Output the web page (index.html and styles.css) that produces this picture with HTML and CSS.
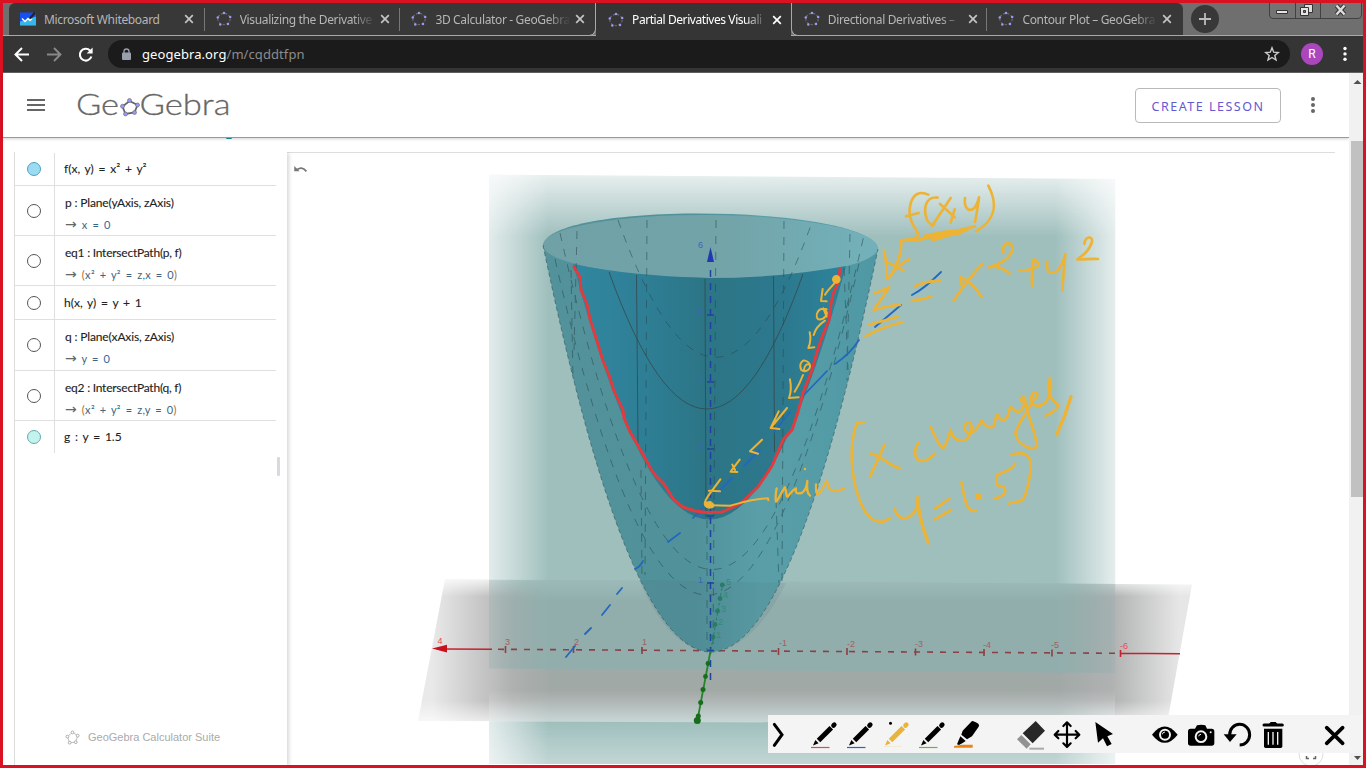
FILE: index.html
```html
<!DOCTYPE html>
<html lang="en">
<head>
<meta charset="utf-8">
<title>Partial Derivatives Visualization</title>
<link rel="stylesheet" href="styles.css">
</head>
<body>
<svg width="0" height="0" class="defs" aria-hidden="true">
  <defs>
    <symbol id="fav" viewBox="0 0 16 16">
      <ellipse cx="8" cy="8" rx="6.200" ry="5.600" fill="none" stroke="#666" stroke-width="1.200" stroke-dasharray="2.500 1.500"/>
      <g fill="#9a98f8"><circle cx="8" cy="2" r="1.250"/><circle cx="14.200" cy="6" r="1.250"/><circle cx="12" cy="13" r="1.250"/><circle cx="4.300" cy="13.400" r="1.250"/><circle cx="1.800" cy="6.600" r="1.250"/></g>
    </symbol>
    <symbol id="cross" viewBox="0 0 10 10"><path d="M1.2 1.2 8.8 8.8M8.8 1.2 1.2 8.8" stroke="currentColor" stroke-width="1.7"/></symbol>
    <symbol id="pen" viewBox="0 0 36 38">
      <path d="M12.5 25.5 25.3 12.7" stroke="currentColor" stroke-width="5"/>
      <path d="M27.5 10.5 28.3 9.7" stroke="currentColor" stroke-width="4.6" stroke-linecap="round"/>
      <path d="M7 30.4 9.4 25 12.6 28.2Z" fill="currentColor"/>
    </symbol>
  </defs>
</svg>
<div class="screen">
  <div class="tabs">
    <div class="tab first"><svg class="fav" viewBox="0 0 16 13"><path d="M0 0H16V13H0Z" fill="#1550f5"/><path d="M0 13V9L7 7 16 4V13Z" fill="#35b7ec"/><path d="M2 6 5 9 8 6 10 8 12 6" fill="none" stroke="#fff" stroke-width="1.5"/><path d="M10 6 15 0" stroke="#222" stroke-width="2"/></svg><span class="title">Microsoft Whiteboard</span><svg class="x"><use href="#cross"/></svg></div>
    <div class="tab sep"><svg class="fav"><use href="#fav"/></svg><span class="title">Visualizing the Derivative</span><svg class="x"><use href="#cross"/></svg></div>
    <div class="tab sep left-of"><svg class="fav"><use href="#fav"/></svg><span class="title">3D Calculator - GeoGebra</span><svg class="x"><use href="#cross"/></svg></div>
    <div class="tab active"><svg class="fav"><use href="#fav"/></svg><span class="title tight">Partial Derivatives Visuali</span><svg class="x"><use href="#cross"/></svg></div>
    <div class="tab right-of"><svg class="fav"><use href="#fav"/></svg><span class="title">Directional Derivatives –</span><svg class="x"><use href="#cross"/></svg></div>
    <div class="tab sep last"><svg class="fav"><use href="#fav"/></svg><span class="title">Contour Plot – GeoGebra</span><svg class="x"><use href="#cross"/></svg></div>
    <div class="strip">
      <svg class="plus" viewBox="0 0 28 28"><circle cx="14" cy="14" r="14" fill="#383838"/><path d="M8 14H20M14 8V20" stroke="#bbb" stroke-width="1.8"/></svg>
      <svg class="winbtns" viewBox="0 0 93 16"><path d="M.5 0V12Q.5 15.500 4 15.500H89Q92.500 15.500 92.500 12V0M26.500 0V15.500M51.500 0V15.500" fill="#747474" stroke="#414141"/><path d="M7.500 7.500H18.500V10.500H7.500Z" fill="#e4e4e4" stroke="#333"/><path d="M35.500 1.500H43.500V9.500H35.500Z" fill="#ddd" stroke="#333"/><path d="M31.500 4.500H39.500V12.500H31.500Z" fill="#e4e4e4" stroke="#333"/><path d="M34.500 7.500H36.500V9.500H34.500Z" fill="#777" stroke="#333"/><path d="M67.500 2.500 75.500 11.500M75.500 2.500 67.500 11.500" stroke="#333" stroke-width="4.500"/><path d="M67.500 2.500 75.500 11.500M75.500 2.500 67.500 11.500" stroke="#ddd" stroke-width="2.500"/></svg>
    </div>
  </div>
  <div class="addressbar">
    <svg class="nav" viewBox="0 0 96 34" fill="none"><path d="M26 17.500H13M19 11 12.500 17.500 19 24" stroke="#fff" stroke-width="2"/><path d="M44 17.500H57M51 11 57.500 17.500 51 24" stroke="#888" stroke-width="1.900"/><path d="M87 13.500A5.900 5.900 0 1 0 88.400 19.500" stroke="#fff" stroke-width="2.100"/><path d="M89.600 10.500V16.500H83.600Z" fill="#fff"/></svg>
    <div class="omnibox">
      <svg class="lock" viewBox="0 0 9 12"><path d="M2 5V3.500A2.500 2.500 0 0 1 7 3.500V5" fill="none" stroke="#9aa0ab" stroke-width="1.300"/><rect y="4.500" width="9" height="7.500" rx="1" fill="#9aa0ab"/></svg>
      <span class="url"><b>geogebra.org</b>/m/cqddtfpn</span>
      <svg class="star" viewBox="0 0 16 16"><path d="M8 1.800 9.700 6.200 14.300 6.500 10.800 9.500 12 14 8 11.500 4 14 5.200 9.500 1.700 6.500 6.300 6.200Z" fill="none" stroke="#ccc" stroke-width="1.400"/></svg>
    </div>
    <span class="avatar">R</span>
    <svg class="kebab" viewBox="0 0 4 16"><g fill="#fff"><circle cx="2" cy="2.500" r="1.700"/><circle cx="2" cy="7.900" r="1.700"/><circle cx="2" cy="13.300" r="1.700"/></g></svg>
  </div>

  <div class="viewport">
    <div class="page">
      <header class="site-header">
        <svg class="burger" viewBox="0 0 18 12"><path d="M0 1H18M0 6H18M0 11H18" stroke="#666" stroke-width="1.900"/></svg>
        <svg class="logo" viewBox="76 88 158 34">
          <g class="wordmark"><text x="76" y="114.700" textLength="43" lengthAdjust="spacingAndGlyphs">Ge</text><text x="139.500" y="114.700" textLength="91" lengthAdjust="spacingAndGlyphs">Gebra</text></g>
          <path d="M129.500 101 137.500 105 134.500 112.500 125.500 114 122.500 106.500Z" fill="none" stroke="#666" stroke-width="1.800"/>
          <g fill="#9996ff" stroke="#666" stroke-width=".6"><circle cx="129.500" cy="100.500" r="2"/><circle cx="137.500" cy="105" r="2"/><circle cx="134.500" cy="112.500" r="2"/><circle cx="125.500" cy="114" r="2"/><circle cx="122.500" cy="106.300" r="2"/></g>
        </svg>
        <span class="create">CREATE LESSON</span>
        <svg class="more" viewBox="0 0 4 16"><g fill="#666"><circle cx="2" cy="2" r="2"/><circle cx="2" cy="8" r="2"/><circle cx="2" cy="14" r="2"/></g></svg>
      </header>
      <div class="heading-tail"></div>
      <main class="applet">
        <section class="algebra">
          <div class="rows">
            <div class="row r1"><i class="dot blue"></i><div class="cell"><span class="ex w1">f(x, y) = x² + y²</span></div></div>
            <div class="row r2"><i class="dot"></i><div class="cell"><span class="ex w2">p : Plane(yAxis, zAxis)</span><span class="out"><em>→</em> x = <s>0</s></span></div></div>
            <div class="row r2"><i class="dot"></i><div class="cell"><span class="ex w3">eq1 : IntersectPath(p, f)</span><span class="out"><em>→</em> <q>(</q>x² + y² = z,x = 0<q>)</q></span></div></div>
            <div class="row r3"><i class="dot"></i><div class="cell"><span class="ex w1">h(x, y) = y + 1</span></div></div>
            <div class="row r4"><i class="dot"></i><div class="cell"><span class="ex w2">q : Plane(xAxis, zAxis)</span><span class="out"><em>→</em> y = <s>0</s></span></div></div>
            <div class="row r2"><i class="dot"></i><div class="cell"><span class="ex w3">eq2 : IntersectPath(q, f)</span><span class="out"><em>→</em> <q>(</q>x² + y² = z,y = 0<q>)</q></span></div></div>
            <div class="row r5"><i class="dot teal"></i><div class="cell"><span class="ex w1">g : y = 1.5</span></div></div>
          </div>
          <div class="grip"></div>
          <div class="brand"><svg viewBox="0 0 16 16"><path d="M8 2.500 13.500 6 11.500 13 5 13.500 2.500 7Z" fill="none" stroke="#bbb"/><g fill="#fff" stroke="#aaa"><circle cx="8" cy="2.500" r="1.500"/><circle cx="13.500" cy="6" r="1.500"/><circle cx="11.500" cy="13" r="1.500"/><circle cx="5" cy="13.500" r="1.500"/><circle cx="2.500" cy="7" r="1.500"/></g></svg><span>GeoGebra Calculator Suite</span></div>
        </section>
        <section class="graphics">
          <svg class="scene" viewBox="287 153 1061 611" fill="none">
            <defs>
              <linearGradient id="hx" gradientUnits="userSpaceOnUse" x1="489" x2="1115" y1="0" y2="0"><stop offset="0" stop-color="#fff" stop-opacity=".3"/><stop offset=".045" stop-color="#fff" stop-opacity=".62"/><stop offset=".095" stop-color="#fff"/><stop offset=".905" stop-color="#fff"/><stop offset=".955" stop-color="#fff" stop-opacity=".62"/><stop offset="1" stop-color="#fff" stop-opacity=".28"/></linearGradient>
              <linearGradient id="vy" gradientUnits="userSpaceOnUse" x1="0" x2="0" y1="175" y2="790"><stop offset="0" stop-color="#9fbfbd" stop-opacity=".25"/><stop offset=".05" stop-color="#9fbfbd" stop-opacity=".62"/><stop offset=".1" stop-color="#9fbfbd"/><stop offset=".89" stop-color="#9fbfbd"/><stop offset="1" stop-color="#9fbfbd" stop-opacity=".4"/></linearGradient>
              <mask id="edge" maskUnits="userSpaceOnUse" x="480" y="160" width="650" height="620"><rect x="489" y="160" width="626.500" height="620" fill="url(#hx)"/></mask>
              <linearGradient id="gx" gradientUnits="userSpaceOnUse" x1="432" y1="650" x2="1179" y2="654"><stop offset="0" stop-color="#e9e9e9"/><stop offset=".07" stop-color="#c4c4c4"/><stop offset=".11" stop-color="#adb0af"/><stop offset=".16" stop-color="#a1a9a7"/><stop offset=".84" stop-color="#a1a9a7"/><stop offset=".91" stop-color="#b0b2b2"/><stop offset="1" stop-color="#e6e6e6"/></linearGradient>
              <linearGradient id="gy" gradientUnits="userSpaceOnUse" x1="0" x2="0" y1="579" y2="724"><stop offset="0" stop-color="#fff" stop-opacity=".2"/><stop offset=".12" stop-color="#fff"/><stop offset=".84" stop-color="#fff"/><stop offset="1" stop-color="#fff" stop-opacity=".25"/></linearGradient>
              <mask id="floor" maskUnits="userSpaceOnUse" x="410" y="570" width="800" height="160"><rect x="410" y="570" width="800" height="160" fill="url(#gy)"/></mask>
              <linearGradient id="under" gradientUnits="userSpaceOnUse" x1="0" x2="0" y1="690" y2="724"><stop offset="0" stop-color="#fff" stop-opacity="0"/><stop offset="1" stop-color="#fff" stop-opacity=".45"/></linearGradient>
              <linearGradient id="fy" gradientUnits="userSpaceOnUse" x1="0" x2="0" y1="580" y2="602"><stop offset="0" stop-color="#9bbab8"/><stop offset="1" stop-color="#91aead"/></linearGradient>
              <linearGradient id="body" x1="0" x2="1"><stop offset="0" stop-color="#53929a"/><stop offset=".45" stop-color="#50919a"/><stop offset=".65" stop-color="#5a9fa8"/><stop offset="1" stop-color="#4e98a4"/></linearGradient>
              <linearGradient id="rim" x1="0" x2="1"><stop offset="0" stop-color="#70a1a7"/><stop offset=".5" stop-color="#72a3a7"/><stop offset="1" stop-color="#73b1ba"/></linearGradient>
              <linearGradient id="inner" x1="0" x2="1"><stop offset="0" stop-color="#30879f"/><stop offset=".25" stop-color="#2e7f96"/><stop offset=".48" stop-color="#2c7586"/><stop offset=".75" stop-color="#2c788d"/><stop offset="1" stop-color="#2d839c"/></linearGradient>
            </defs>
            <g mask="url(#edge)"><path d="M489 174.500 1115.500 179V780H489Z" fill="url(#vy)"/></g>
            <g mask="url(#floor)"><path d="M445 579 1192 584.500 1167 724 418 721Z" fill="url(#gx)"/></g>
            <path d="M489 690H1115V723.500L489 721.500Z" fill="url(#under)"/>
            <g mask="url(#edge)"><path d="M489 580 1115.500 584V673L489 668.500Z" fill="url(#fy)"/></g>
            <g stroke="#8b4044" stroke-width="1.600"><path d="M498 649.300 1120 653.300" stroke-dasharray="6 7"/><path d="M505.500 646V653M573.500 646V653M642 647V654M778.500 648V655M847 648V655M915.500 648.500V655.500M984 649V656M1052 649.500V656.500"/></g>
            <path d="M445 649 492 649.200M1120 653.200 1180 653.800M1120.500 650V657" stroke="#c6202f" stroke-width="1.600"/><path d="M432 648.600 447 644.800V652.600Z" fill="#c8101e"/>
            <g class="num rednum"><text class="bright" x="437.500" y="644">4</text><text x="505" y="645">3</text><text x="574" y="645">2</text><text x="642" y="645">1</text><text x="779" y="646">-1</text><text x="847" y="647">-2</text><text x="915" y="647">-3</text><text x="983" y="648">-4</text><text x="1051" y="648">-5</text><text class="bright" x="1120" y="649">-6</text></g>
            <path d="M543 245Q710.500 1057 878 249C870 205 552 200 543 245Z" fill="url(#body)"/>
            <path d="M639 580Q670 651 710 651Q753 650 786 583Z" fill="#476f75" opacity=".12"/>
            <ellipse cx="710.500" cy="246.500" rx="167.500" ry="31.500" transform="rotate(.5 710 247)" fill="url(#rim)"/>
            <path d="M573 264Q709 774 846 266Q780 278 709 278Q630 276 573 264Z" fill="url(#inner)"/>
            <g stroke="#36474b" stroke-width="1" opacity=".8"><path d="M609 272Q707 545 803 274M636.500 275 638 445M705 279 706 517M773.500 276 774.500 452"/></g>
            <g stroke="#29484c" stroke-width="1" stroke-dasharray="8 8" opacity=".55">
              <path d="M618 220Q715 492 811 225M647 220 645 575M716 220 713 650M784 221 782 583M577 231 574 350M850 234 847 380M560 233Q712 905 864 235M555 259Q707 931 860 259M571 270 573 380M844 268 848 370M641 470 642 578M707 520V650M776 500 779 583"/>
              <path d="M543 245Q710.500 1057 878 249" stroke-dasharray="4 3"/>
            </g>
            <g stroke="#20419f" stroke-width="1.500"><path d="M710.500 270V682" stroke-dasharray="7 6"/><path d="M707 315H714M707 382H714M707 449H714M707 516H714M707 583H714M707 650.500H714"/></g><path d="M710.500 247 714 262H707Z" fill="#2038b0"/>
            <g class="num bluenum"><text x="698" y="248">6</text><text x="698" y="316">5</text><text x="698" y="383">4</text><text x="698" y="450">3</text><text x="698" y="517">2</text><text x="698" y="583">1</text></g>
            <g fill="#277c68" stroke="#277c68"><path d="M711 650 722.500 585" stroke-dasharray="3 2"/><circle cx="713" cy="637" r="2"/><circle cx="715" cy="624.500" r="2"/><circle cx="717.500" cy="611" r="2"/><circle cx="720" cy="598.500" r="2"/><circle cx="722.300" cy="585" r="2"/></g>
            <g class="num greennum"><text x="726" y="585">5</text><text x="723" y="598">4</text><text x="721" y="612">3</text><text x="718" y="625">2</text><text x="716" y="638">1</text></g>
            <g fill="#176d1b"><path d="M710.500 651 697.500 720" stroke="#24852a" stroke-width="1.800"/><circle cx="708" cy="663.500" r="2.400"/><circle cx="705.500" cy="676.500" r="2.400"/><circle cx="703" cy="689.500" r="2.500"/><circle cx="700.700" cy="702.500" r="2.500"/><circle cx="698.300" cy="716" r="2.500"/><circle cx="697.300" cy="720.500" r="3.500"/></g>
          </svg>
          <svg class="undo" viewBox="0 0 15 10"><path d="M2 6Q8 .500 13.500 7" fill="none" stroke="#777" stroke-width="2"/><path d="M0 1V7H6Z" fill="#777"/></svg>
          <svg class="full" viewBox="0 0 28 28"><circle cx="14" cy="14" r="12" fill="#fff" stroke="#ddd"/><path d="M9.500 12V9.500H12M16 9.500H18.500V12M18.500 16V18.500H16M12 18.500H9.500V16" fill="none" stroke="#666" stroke-width="1.500"/></svg>
        </section>
      </main>
    </div>
    <div class="scrollbar"><svg viewBox="0 0 14 16"><path d="M4.500 11 8.500 7 12.500 11Z" fill="#505050"/></svg><div class="thumb"></div><svg viewBox="0 0 14 16"><path d="M5 7H12L8.500 11Z" fill="#505050"/></svg></div>
  </div>
</div>

<svg class="ink" viewBox="0 0 1366 768" fill="none" stroke-linecap="round" stroke-linejoin="round">
  <path stroke="#2468bd" stroke-width="1.800" d="M566 657 575 646M585 634 591 628M602 615 610 605M617 594 622 588M635 569Q640 567 643 561M668 542 680 533M693 518 705 505M718 492 732 478M744 466 760 450M774 432 790 412M802 397 827 371M835 364Q850 354 859 340M875 327 901 305M912 295Q924 289 941 272"/>
  <path stroke="#e23b3e" stroke-width="2.900" d="M574 267 580 277 581 290 587 304 590 319 597 341 603 361 609 375 614 391 623 410 624 418 630 432 640 449 651 469 655 475 664 484 674 500 683 507 695 511 707 512.500 722 512 740 504 758 487 772 466 783 440 792 430 798 412 803 393 812 370 817 352 822 337 829 320 831 304 833 294 838 283 840 269"/>
  <g stroke="#edb335" stroke-width="8">
    <g transform="translate(860 170) scale(.33333)">
      <path d="M205 74C180 62 160 72 152 100C140 145 165 175 176 192C172 205 150 210 130 210M138 139 176 129M233 83C200 78 190 110 198 140C202 158 212 165 222 163M240 102 284 142M272 84 216 168M284 118 272 158M315 84C312 110 322 125 338 118C350 110 354 95 357 82C354 110 350 130 345 156M385 47C410 95 415 145 348 184"/>
      <path d="M130 210 170 211 345 169M193 198C260 180 300 180 322 180L220 210M218 204 300 190"/>
      <path d="M124 210C125 250 115 275 92 320M72 241C78 265 80 300 80 325L86 325C105 295 130 275 148 268M78 274 130 301"/>
      <path d="M45 370 88 352 41 420C70 412 100 404 120 405M28 464 113 440M17 499C50 480 90 465 129 456M166 348C190 338 220 332 242 333M155 391C180 390 200 385 214 379"/>
      <path d="M304 345 303 322C325 330 345 350 365 381M367 282Q325 325 281 392M430 248C425 215 455 210 458 235C455 265 415 285 387 292C410 285 430 295 449 310M479 303C495 302 520 300 537 285Q530 268 521 268C518 290 512 320 517 349M562 275C558 305 570 315 588 305C605 290 612 270 616 252C612 290 610 320 607 361M673 222C675 200 697 195 696 215C690 240 670 255 652 268C670 270 690 265 714 267"/>
      <path d="M30 851C55 850 80 885 122 896M74 823 30 920M176 817C160 840 160 875 190 873C205 870 215 862 224 851M212 770C225 800 235 825 249 836C262 820 265 795 272 780C275 800 285 812 310 812C325 808 335 790 335 770C330 745 310 760 315 780C325 800 345 790 365 752C375 770 385 775 400 770C408 755 405 740 412 733C420 750 430 755 440 745C450 725 448 712 452 710C465 725 475 730 483 722C498 700 500 680 487 681C475 690 485 700 495 690C495 720 530 790 531 830C510 845 470 820 466 790C468 770 500 730 520 690C548 670 520 655 514 680C510 710 540 718 560 692M570 624C560 650 560 680 596 706C590 720 575 730 557 737M570 624C577 650 570 680 560 692"/>
      <path stroke-width="10" d="M633 680Q615 740 590 794M173 983C175 1030 190 1080 205 1118"/>
      <path d="M104 1015C110 1045 130 1050 150 1040C170 1025 175 1000 173 983M226 1016 268 986M224 1048 273 1020M304 936C315 990 320 1030 348 1022M465 881C455 900 435 905 412 914C405 950 410 945 430 950C450 970 415 985 402 986M454 854C500 840 515 860 512 900C505 950 495 980 488 990C475 997 460 995 447 1001"/>
      <circle cx="355" cy="980" r="6" fill="#edb335"/>
    </g>
    <g transform="translate(640 400) scale(.33333)">
      <path d="M674 67 650 70C625 140 635 230 655 290C675 350 710 385 750 354"/>
      <path stroke-width="7" d="M410 265C405 290 408 305 408 305C415 300 425 275 435 262C440 275 438 290 442 290C450 285 455 270 468 265C465 280 470 282 485 279C500 270 500 255 502 243C500 265 500 280 510 287M495 207V207M528 253C528 270 528 283 533 283C550 270 555 250 560 240C565 265 570 275 590 273L613 266"/>
      <path stroke-width="6" d="M385 301 384 295C330 297 300 310 270 317L210 316M241 238 210 280C195 300 190 312 197 318M207 272 240 274M195 308 212 306M299 179 272 215 292 216M277 194 285 210M366 119 330 154 354 161M441 24 392 84 418 87M416 34 392 84"/>
      <ellipse cx="209" cy="316" rx="12" ry="8" fill="#edb335" stroke-width="4"/>
    </g>
    <g transform="translate(680 170) scale(.33333)" stroke-width="6">
      <circle cx="469" cy="328" r="10" fill="#edb335"/>
      <path d="M463 340Q440 365 435 374M428 357 423 393 440 394M440 418C410 410 405 440 415 448C435 450 448 430 435 420M430 415 440 440M435 452C415 465 405 480 401 495M389 487Q395 510 385 534L403 532M388 580C370 560 355 580 364 600C375 608 392 600 390 585C380 578 372 590 372 600M369 615Q360 640 344 665M330 628 Q336 660 327 684L356 682"/>
    </g>
  </g>
</svg>

<div class="pentools">
  <svg class="chev" viewBox="24 45 60 114"><path d="M43 73 66 104 43 136" fill="none" stroke="#000" stroke-width="9" stroke-linecap="round"/></svg>
  <svg class="tool" viewBox="0 0 36 38"><use href="#pen"/><path d="M5 32.500H23.500" stroke="#e04a4e" stroke-width="1.200"/></svg>
  <svg class="tool" viewBox="0 0 36 38"><use href="#pen"/><path d="M5 32.500H23.500" stroke="#2466c0" stroke-width="1.200"/></svg>
  <svg class="tool yellow" viewBox="0 0 36 38"><use href="#pen"/><circle cx="12.500" cy="8.300" r="1.500" fill="#000"/><path d="M6 31.500H23.500" stroke="#f0ead6"/></svg>
  <svg class="tool" viewBox="0 0 36 38"><use href="#pen"/><path d="M5 32.500H23.500" stroke="#77a84b" stroke-width="1.200"/></svg>
  <svg class="tool" viewBox="573 45 108 114"><path d="M639 63Q643 62 658 71Q662 75 659 80L639 109 624 118 607 104 611 92ZM604 109 620 123 611 129 600 135 594 133Z" fill="#000"/><path d="M585 138 610 134H641V143H585Z" fill="#ef8214"/></svg>
  <svg class="tool eraser" viewBox="759 45 108 114"><path d="M827 63 855 92 818 130 788 100Z" fill="#282828"/><path d="M784 105 812 133 800 146 771 118Z" fill="#929292"/><path d="M808 146H852" stroke="#aaa" stroke-width="6"/></svg>
  <svg class="tool" viewBox="-33 45 108 114"><path d="M21 68V140M-15 104H57M10 78 21 67 32 78M10 130 21 141 32 130M-5 93-16 104-5 115M47 93 58 104 47 115" fill="none" stroke="#000" stroke-width="6.500" stroke-linecap="round" stroke-linejoin="round"/></svg>
  <svg class="tool" viewBox="75 45 108 114"><path d="M106 66 159 102 142 109 155 132 141 139 129 115 114 128Z" fill="#000"/></svg>
  <svg class="tool eye" viewBox="261 45 108 114"><path d="M276 104Q314 55 353 104Q314 153 276 104Z" fill="#000"/><circle cx="315" cy="104" r="15" fill="#000" stroke="#f4f4f4" stroke-width="6"/><path d="M307 103Q308 96 315 96" fill="none" stroke="#f4f4f4" stroke-width="3"/></svg>
  <svg class="tool" viewBox="369 45 108 114"><path d="M392 86H405L411 76Q424 73 436 76L441 86H455Q463 86 463 94V129Q463 137 455 137H392Q384 137 384 129V94Q384 86 392 86Z" fill="#000"/><circle cx="423" cy="110" r="16" fill="none" stroke="#f4f4f4" stroke-width="6"/><path d="M416 109Q417 103 423 103" fill="none" stroke="#f4f4f4" stroke-width="3"/><circle cx="452" cy="97" r="3" fill="#f4f4f4"/></svg>
  <svg class="tool" viewBox="477 45 108 114"><path d="M509 105A30 31 0 1 1 539 135" fill="none" stroke="#000" stroke-width="9"/><path d="M491 103H530L510 126Z" fill="#000"/></svg>
  <svg class="tool" viewBox="585 45 108 114"><path d="M612 75H667" stroke="#000" stroke-width="9" stroke-linecap="round"/><path d="M627 72 632 66H647L652 72Z" fill="#000"/><path d="M612 86H667V139Q667 144 662 144H617Q612 144 612 139Z" fill="#000"/><path d="M625 96V134M639 96V134M653 96V134" stroke="#f4f4f4" stroke-width="4"/></svg>
  <svg class="tool close" viewBox="771 45 108 114"><path d="M800 83 848 130M848 83 800 130" stroke="#000" stroke-width="11" stroke-linecap="round"/></svg>
</div>
</body>
</html>
```
FILE: styles.css
```css
* { box-sizing: border-box; }
body { margin: 0; width: 1366px; height: 768px; overflow: hidden; position: relative; background: #fff; font-family: "Noto Sans", "Open Sans", sans-serif; }
svg { display: block; flex: none; }
.defs { position: absolute; }
.screen { width: 1366px; height: 768px; border: 3px solid #da1023; display: flex; flex-direction: column; }

.tabs { height: 33px; display: flex; background: #6f6f6f; border-bottom: 1px solid #a9a9a9; padding-left: 5.500px; flex: none; }
.tab { width: 195.700px; height: 32px; display: flex; align-items: center; padding-left: 11.500px; background: #383838; color: #b6b6b6; flex: none; position: relative; }
.first { border-radius: 6px 0 0 0; }
.last { border-radius: 0 6px 0 0; }
.sep::before { content: ""; width: 1px; height: 23px; background: #777; margin: 0 0 0 -12px; align-self: center; }
.sep .fav { margin-left: 11px; }
.fav { width: 16px; height: 16px; }
.title { width: 134px; margin-left: 8px; font-size: 12px; letter-spacing: -.350px; white-space: nowrap; -webkit-mask-image: linear-gradient(90deg, #000 84%, transparent 101%); mask-image: linear-gradient(90deg, #000 84%, transparent 101%); }
.tight { letter-spacing: -.430px; }
.first .title { -webkit-mask-image: none; mask-image: none; }
.x { width: 10px; height: 10px; margin-left: 6px; color: #c4c4c4; }
.active { background: #353535; color: #fff; height: 33px; padding-left: 12.500px; }
.active .x { color: #fff; }
.left-of { border-bottom: 1px solid #a9a9a9; border-right: 1px solid #a9a9a9; border-radius: 0 0 7px 0; height: 33px; }
.right-of { border-bottom: 1px solid #a9a9a9; border-left: 1px solid #a9a9a9; border-radius: 0 0 0 7px; height: 33px; padding-left: 11.500px; }
.strip { flex: 1; display: flex; align-items: flex-start; }
.plus { width: 28px; height: 28px; margin: 2px 0 0 8px; }
.winbtns { width: 93px; height: 16px; margin: 0 1px 0 auto; }

.addressbar { height: 37px; background: #353535; border-bottom: 1px solid #626262; display: flex; align-items: center; flex: none; }
.nav { width: 96px; height: 34px; }
.omnibox { width: 1182px; height: 28px; border-radius: 14px; background: #1b1b1b; margin-left: 9px; display: flex; align-items: center; padding: 0 10px 0 14px; }
.lock { width: 9px; height: 12px; }
.url { margin-left: 11px; font-size: 13px; letter-spacing: .080px; color: #8c8c8c; flex: 1; }
.url b { color: #fff; font-weight: 400; }
.star { width: 16px; height: 16px; }
.avatar { width: 22px; height: 22px; border-radius: 50%; background: #ab47bc; color: #fff; font: 12px/22px Roboto, sans-serif; text-align: center; margin-left: 11px; }
.kebab { width: 4px; height: 16px; margin-left: 20px; }

.viewport { flex: 1; display: flex; min-height: 0; }
.page { flex: 1; min-width: 0; display: flex; flex-direction: column; }
.site-header { height: 65px; border-bottom: 1px solid #999; box-shadow: 0 1px 3px rgba(0,0,0,.18); display: flex; align-items: center; padding: 0 34px 0 24px; flex: none; }
.burger { width: 18px; height: 12px; }
.logo { width: 158px; height: 34px; margin-left: 31px; }
.wordmark { font-family: Lato, sans-serif; font-size: 29px; font-weight: 300; fill: #666; stroke: #666; stroke-width: .300px; }
.create { width: 146px; height: 35px; margin-left: auto; border: 1px solid #b9b9b9; border-radius: 4px; text-align: center; font-size: 12.500px; line-height: 35px; letter-spacing: 1.500px; color: #6557d2; white-space: nowrap; }
.more { width: 4px; height: 16px; margin-left: 30px; }
.heading-tail { width: 6px; height: 1px; margin-left: 223px; background: #158088; flex: none; border-radius: 0 0 3px 3px; }
.applet { margin: 13px 0 0 11px; flex: 1; min-height: 0; display: flex; position: relative; }
.applet::before { content: ""; position: absolute; z-index: 1; left: 0; top: 0; width: 1321px; height: 1px; background: #ddd; }
.algebra { width: 273px; border-left: 1px solid #ddd; padding-top: 1px; display: flex; flex-direction: column; box-shadow: 2px 1px 4px rgba(0,0,0,.16); position: relative; background: #fff; z-index: 1; clip-path: inset(0 -8px 0 0); }
.rows { width: 261px; }
.row { display: flex; align-items: center; border-bottom: 1px solid #dfdfdf; padding-left: 12px; }
.r1 { height: 33px; }
.r2 { height: 50px; }
.r3 { height: 34px; }
.r4 { height: 51px; }
.r5 { height: 32px; border-bottom: 0; }
.dot { width: 14px; height: 14px; border: 1px solid #555; border-radius: 50%; background: #fff; flex: none; }
.dot.blue { background: #9bdcf2; border-color: #529fc3; }
.dot.teal { background: #c2f3ee; border-color: #69aaaa; }
.cell { height: 100%; flex: 1; border-left: 1px solid #dfdfdf; margin-left: 13px; padding-left: 10px; display: flex; flex-direction: column; justify-content: center; }
.ex, .out { white-space: nowrap; font-family: Lato, "Open Sans", sans-serif; color: #222; }
.ex { font-size: 12px; line-height: 16px; -webkit-text-stroke: .100px #222; }
.w1 { margin-left: -1px; word-spacing: 1.700px; }
.w2 { letter-spacing: -.150px; }
.w3 { letter-spacing: -.240px; }
.out { font-size: 11px; line-height: 14px; margin-top: 7px; color: #3d6484; letter-spacing: .300px; word-spacing: 1.700px; }
.r2 .cell, .r4 .cell { padding-top: 5px; }
.out em { font: 14px/10px "DejaVu Sans", sans-serif; color: #666; }
.out s { text-decoration: none; color: #3268a2; }
.out q { quotes: none; color: #a9692f; }
.grip { width: 3px; height: 19px; background: #d8d9de; border-radius: 1px; margin: 4px 0 0 262px; }
.brand { margin: auto 0 20px 50px; display: flex; align-items: center; gap: 8px; font: 11px/16px "Liberation Sans", sans-serif; color: #aaa; }
.brand svg { width: 15px; height: 15px; }
.graphics { flex: 1; position: relative; overflow: hidden; }
.scene { width: 1061px; height: 611px; margin-top: 1px; }
.undo { position: absolute; left: 7px; top: 13px; width: 14px; height: 9px; }
.full { position: absolute; left: 1010px; top: 588px; width: 28px; height: 28px; }
.num { font: 9px "Liberation Sans", sans-serif; }
.rednum { fill: #a35e62; }
.bright { fill: #ee4852; }
.bluenum { fill: #3c67b6; }
.greennum { fill: #338a76; }
.scrollbar { width: 14px; background: #f1f1f1; display: flex; flex-direction: column; }
.scrollbar svg { width: 14px; height: 16px; }
.thumb { width: 12px; height: 356px; background: #c1c1c1; margin: 52px 0 auto 2px; }

.ink { position: absolute; left: 0; top: 0; width: 1366px; height: 768px; }
.pentools { position: absolute; left: 768px; top: 715px; width: 595px; height: 38px; background: #f4f4f4; display: flex; }
.chev { width: 20px; height: 38px; margin-right: 18px; }
.tool { width: 36px; height: 38px; color: #000; }
.tool.yellow { color: #eab33b; }
.eraser { margin-left: 27px; }
.eye { margin-left: 26px; }
.close { margin-left: 26px; }
```
